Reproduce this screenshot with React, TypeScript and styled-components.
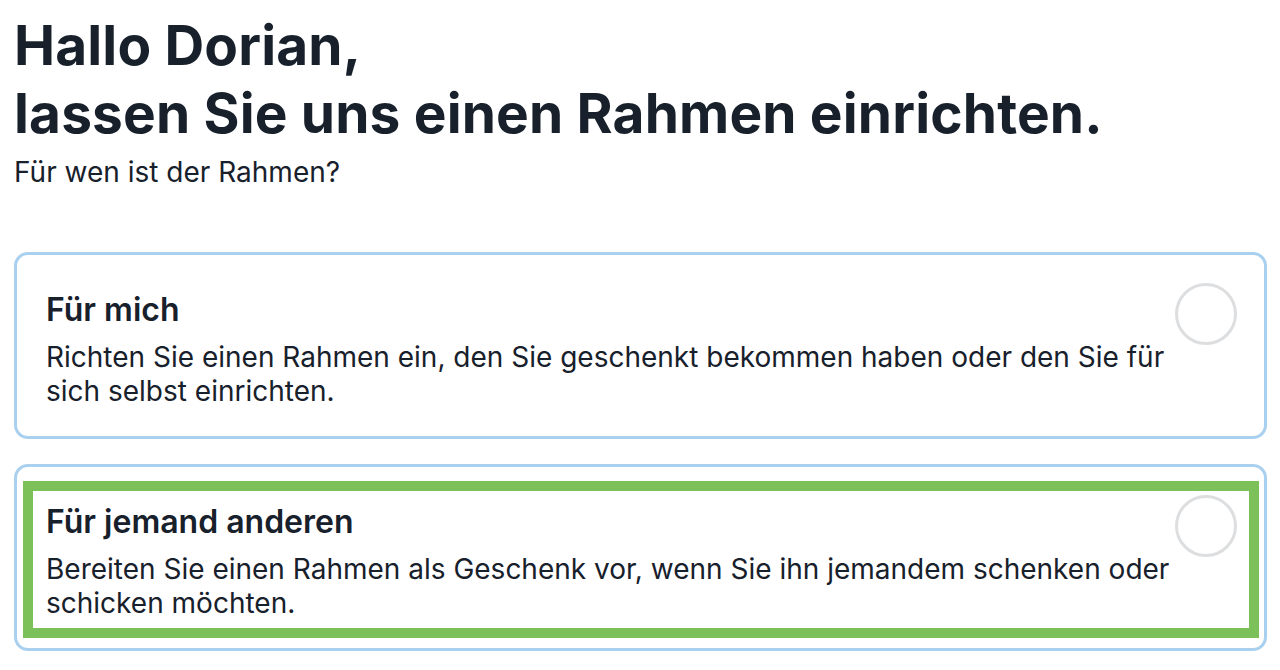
import React from "react";
import styled, { createGlobalStyle } from "styled-components";

const Global = createGlobalStyle`
  html, body { margin: 0; padding: 0; background: #ffffff; }
  body { font-family: Inter, "Noto Sans", sans-serif; color: #17202b; -webkit-font-smoothing: antialiased; }
`;

const Page = styled.main`
  width: 1280px;
  box-sizing: border-box;
  padding: 11px 13px 0 14px;
`;

const Heading = styled.h1`
  margin: 0;
  font-size: 55px;
  line-height: 68px;
  font-weight: 700;
  letter-spacing: 0.15px;
  color: #17202b;
`;

const Sub = styled.p`
  margin: 8px 0 0;
  font-size: 28px;
  line-height: 34px;
  color: #17202b;
`;

const List = styled.div`
  display: flex;
  flex-direction: column;
  gap: 25px;
  margin-top: 63px;
`;

const Card = styled.label`
  position: relative;
  display: flex;
  align-items: flex-start;
  border: 3px solid #a9d0ee;
  border-radius: 14px;
  padding: 36px 27px 28px 29px;
  box-sizing: border-box;
`;

const Texts = styled.div`
  flex: 1;
  min-width: 0;
  display: flex;
  flex-direction: column;
  gap: 11px;
`;

const Title = styled.div`
  font-size: 32px;
  line-height: 38px;
  font-weight: 600;
  color: #17202b;
`;

const Desc = styled.div`
  font-size: 28px;
  line-height: 34px;
  color: #17202b;
`;

const Radio = styled.span`
  flex: none;
  width: 62px;
  height: 62px;
  box-sizing: border-box;
  border-radius: 50%;
  border: 3px solid #dddee0;
  margin-top: -8px;
`;

const Highlight = styled.span`
  position: absolute;
  left: 6px;
  top: 14px;
  right: 5px;
  bottom: 10px;
  border: 10px solid #7cc05a;
  pointer-events: none;
`;

const options = [
  {
    title: "Für mich",
    desc: "Richten Sie einen Rahmen ein, den Sie geschenkt bekommen haben oder den Sie für sich selbst einrichten.",
    highlight: false,
  },
  {
    title: "Für jemand anderen",
    desc: "Bereiten Sie einen Rahmen als Geschenk vor, wenn Sie ihn jemandem schenken oder schicken möchten.",
    highlight: true,
  },
];

export default function App() {
  return (
    <>
      <Global />
      <Page>
        <Heading>
          Hallo Dorian,
          <br />
          lassen Sie uns einen Rahmen einrichten.
        </Heading>
        <Sub>Für wen ist der Rahmen?</Sub>
        <List>
          {options.map((o) => (
            <Card key={o.title}>
              <Texts>
                <Title>{o.title}</Title>
                <Desc>{o.desc}</Desc>
              </Texts>
              <Radio />
              {o.highlight && <Highlight />}
            </Card>
          ))}
        </List>
      </Page>
    </>
  );
}
